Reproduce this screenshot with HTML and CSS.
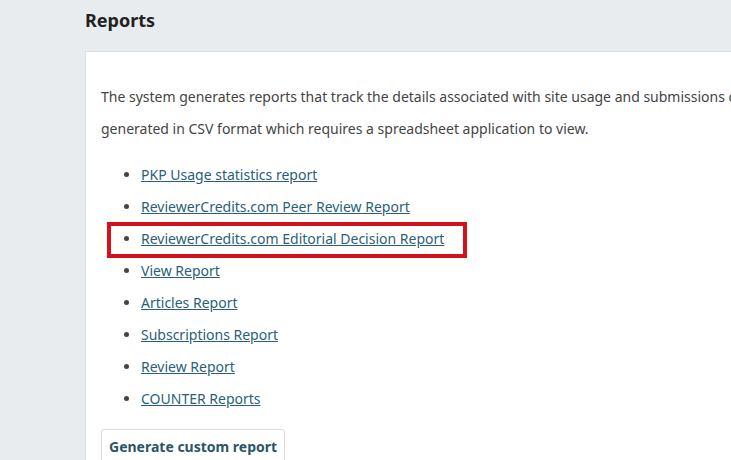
FILE: index.html
```html
<!DOCTYPE html>
<html lang="en">
<head>
    <meta charset="UTF-8">
    <meta name="viewport" content="width=device-width, initial-scale=1.0">
    <title>Reports</title>
    <link rel="stylesheet" href="styles.css">
</head>
<body>
    <div class="page">
        <h1 class="page-title">Reports</h1>
        <div class="panel">
            <p class="intro">The system generates reports that track the details associated with site usage and submissions over a given time period. Reports are generated in CSV format which requires a spreadsheet application to view.</p>
            <ul class="report-list">
                <li><a href="#">PKP Usage statistics report</a></li>
                <li><a href="#">ReviewerCredits.com Peer Review Report</a></li>
                <li class="marked"><a href="#">ReviewerCredits.com Editorial Decision Report</a></li>
                <li><a href="#">View Report</a></li>
                <li><a href="#">Articles Report</a></li>
                <li><a href="#">Subscriptions Report</a></li>
                <li><a href="#">Review Report</a></li>
                <li><a href="#">COUNTER Reports</a></li>
            </ul>
            <button class="custom-btn">Generate custom report</button>
        </div>
    </div>
</body>
</html>
```

FILE: styles.css
```css
html, body {
    overflow: hidden;
}

body {
    margin: 0;
    padding: 0;
    background-color: #e9ecee;
    font-family: "Noto Sans", sans-serif;
    font-size: 14px;
    color: #444;
}

.page {
    padding-left: 85px;
    width: 940px;
}

.page-title {
    margin: 0;
    padding-top: 7px;
    height: 44px;
    font-size: 18px;
    font-weight: bold;
    line-height: 26px;
    color: #222;
}

.panel {
    background-color: #fff;
    border-top: 1px solid #dde0e2;
    border-left: 1px solid #dde0e2;
    padding: 29px 16px 0 15px;
    height: 420px;
}

.intro {
    margin: 0 0 14px 0;
    width: 900px;
    line-height: 32px;
}

.report-list {
    margin: 0 0 14px 0;
    padding-left: 40px;
    line-height: 32px;
}

.report-list a {
    color: #2a5f79;
}

.report-list li.marked {
    position: relative;
}

/* red highlight box drawn over the item */
.report-list li.marked::before {
    content: "";
    position: absolute;
    left: -34px;
    top: -1px;
    width: 352px;
    height: 28px;
    border: 4px solid #d3131b;
}

.custom-btn {
    font-family: "Noto Sans", sans-serif;
    font-size: 14px;
    font-weight: bold;
    color: #2c5567;
    background-color: #fff;
    border: 1px solid #ddd;
    border-radius: 3px;
    padding: 0 7px;
    height: 34px;
    cursor: pointer;
}
```
